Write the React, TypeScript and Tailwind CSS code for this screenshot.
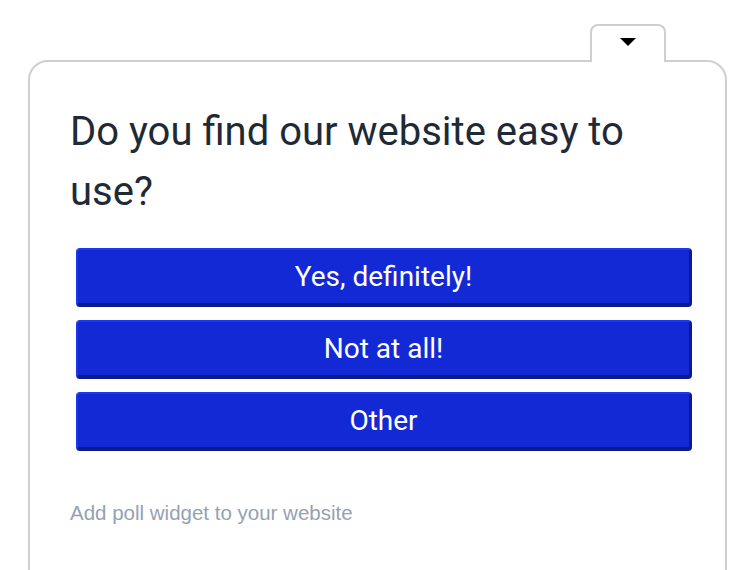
const options = ["Yes, definitely!", "Not at all!", "Other"];

export default function App() {
  return (
    <div className="min-h-screen bg-white pl-[28px] pt-[24px]">
      <div className="flex w-[699px] flex-col">
        {/* collapse tab */}
        <div className="flex justify-end pr-[61px]">
          <button className="relative z-10 -mb-[2px] flex h-[38px] w-[76px] justify-center rounded-t-[8px] border-2 border-b-0 border-[#cfcfcf] bg-white pt-[12px]">
            <svg width="16" height="8" viewBox="0 0 16 8">
              <path d="M0 0 H16 L8 8 Z" fill="#000" />
            </svg>
          </button>
        </div>

        <div className="h-[540px] rounded-t-[20px] border-2 border-[#cfcfcf] px-10 pt-10">
          <h1
            className="text-[40px] leading-[60px] text-[#1f2a37]"
            style={{ fontFamily: "Roboto, sans-serif" }}
          >
            Do you find our website easy to use?
          </h1>

          <div className="ml-[6px] mt-[26px] flex w-[616px] flex-col gap-[13px]">
            {options.map((o) => (
              <button
                key={o}
                className="flex h-[59px] items-center justify-center rounded-[4px] border-l-2 border-t-2 border-r-[3px] border-b-4 border-l-[#1a35ea] border-t-[#1a38f0] border-r-[#0d1a8c] border-b-[#0d1a8c] bg-[#1429d6] text-[28px] text-white"
                style={{ fontFamily: "Roboto, sans-serif" }}
              >
                {o}
              </button>
            ))}
          </div>

          <p
            className="mt-[48px] text-[20.5px] leading-[27px] text-[#95a1b3]"
            style={{ fontFamily: '"Liberation Sans", Arial, sans-serif' }}
          >
            Add poll widget to your website
          </p>
        </div>
      </div>
    </div>
  );
}
